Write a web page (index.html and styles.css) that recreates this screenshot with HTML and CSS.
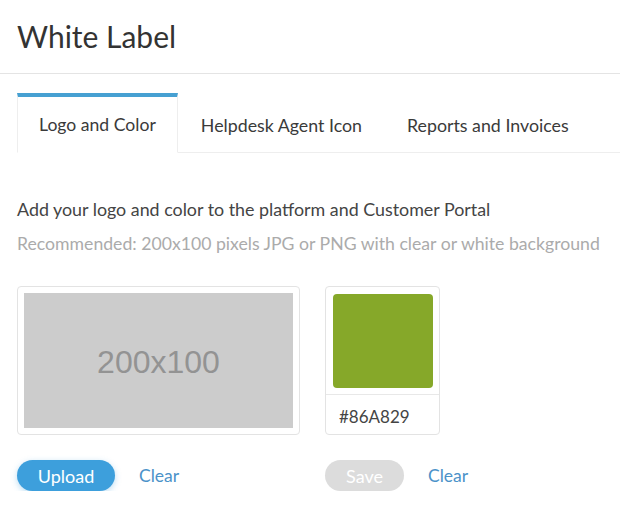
FILE: index.html
```html
<!DOCTYPE html>
<html lang="en">
<head>
<meta charset="utf-8">
<title>White Label</title>
<link rel="stylesheet" href="styles.css">
</head>
<body>
<header class="page-header">
  <h1 class="page-title">White Label</h1>
</header>
<nav class="tabs">
  <div class="tab tab-active">Logo and Color</div>
  <div class="tab">Helpdesk Agent Icon</div>
  <div class="tab">Reports and Invoices</div>
  <div class="tab-fill"></div>
</nav>
<main class="content">
  <p class="desc">Add your logo and color to the platform and Customer Portal</p>
  <p class="hint">Recommended: 200x100 pixels JPG or PNG with clear or white background</p>
  <div class="panels">
    <section class="panel">
      <div class="logo-box">
        <div class="logo-placeholder">200x100</div>
      </div>
      <div class="actions">
        <button class="btn btn-primary">Upload</button>
        <a class="link">Clear</a>
      </div>
    </section>
    <section class="panel">
      <div class="color-box">
        <div class="swatch-wrap"><div class="swatch"></div></div>
        <div class="color-value">#86A829</div>
      </div>
      <div class="actions">
        <button class="btn btn-disabled">Save</button>
        <a class="link">Clear</a>
      </div>
    </section>
  </div>
</main>
</body>
</html>
```

FILE: styles.css
```css
* { box-sizing: border-box; }
html, body { margin: 0; padding: 0; background: #fff; }
body {
  font-family: Lato, "Noto Sans", sans-serif;
  color: #3c3c3c;
  width: 620px;
  overflow: hidden;
}
.page-header {
  height: 74px;
  border-bottom: 1px solid #e4e4e4;
  padding: 0 17px;
  display: flex;
  align-items: center;
}
.page-title {
  margin: 0;
  font-weight: 400;
  font-size: 30px;
  color: #333;
  line-height: 1;
  padding-bottom: 2px;
}
.tabs {
  display: flex;
  margin-top: 19px;
  padding-left: 17px;
  height: 60px;
}
.tab {
  display: flex;
  align-items: center;
  justify-content: center;
  padding: 0 22px 0 23px;
  font-size: 17.8px;
  color: #3a3a3a;
  border-bottom: 1px solid #eeeeee;
  border-top: 4px solid transparent;
}
.tab-active {
  border-top: 4px solid #46a0d2;
  border-left: 1px solid #eeeeee;
  border-right: 1px solid #eeeeee;
  border-bottom: 1px solid transparent;
  padding: 0 21px;
  font-size: 17.6px;
}
.tab-fill { flex: 1; border-bottom: 1px solid #eeeeee; }
.content { padding: 0 17px; }
.desc {
  margin: 46px 0 0;
  font-size: 17.85px;
  line-height: 20px;
  color: #444;
  white-space: nowrap;
}
.hint {
  margin: 15px 0 0;
  font-size: 17.65px;
  line-height: 20px;
  color: #ababab;
  white-space: nowrap;
}
.panels {
  display: flex;
  gap: 25px;
  margin-top: 32px;
}
.panel { display: flex; flex-direction: column; }
.logo-box {
  width: 283px;
  height: 149px;
  border: 1px solid #e3e3e3;
  border-radius: 4px;
  padding: 6px;
}
.logo-placeholder {
  width: 100%;
  height: 100%;
  background: #cccccc;
  display: flex;
  align-items: center;
  justify-content: center;
  font-family: "Liberation Sans", Arial, sans-serif;
  font-size: 32px;
  color: #939393;
  padding-top: 4px;
}
.color-box {
  width: 115px;
  height: 149px;
  border: 1px solid #e3e3e3;
  border-radius: 4px;
  display: flex;
  flex-direction: column;
}
.swatch-wrap {
  padding: 7px 7px 6px 7px;
  border-bottom: 1px solid #e8e8e8;
}
.swatch {
  width: 100px;
  height: 94px;
  background: #86a829;
  border-radius: 4px;
}
.color-value {
  flex: 1;
  display: flex;
  align-items: center;
  padding-left: 13px;
  padding-top: 3px;
  font-size: 17px;
  color: #444;
}
.actions {
  display: flex;
  align-items: center;
  gap: 24px;
  margin-top: 25px;
}
.btn {
  height: 31px;
  border: none;
  border-radius: 16px;
  font-family: Lato, "Noto Sans", sans-serif;
  font-size: 18px;
  color: #fff;
  padding: 0;
}
.btn-primary {
  background: #3d9fdc;
  width: 98px;
  box-shadow: 0 2px 6px rgba(61, 159, 220, 0.35);
}
.btn-disabled {
  background: #dcdcdc;
  width: 79px;
}
.link {
  font-size: 17.5px;
  color: #4b92c9;
  cursor: pointer;
}
```
